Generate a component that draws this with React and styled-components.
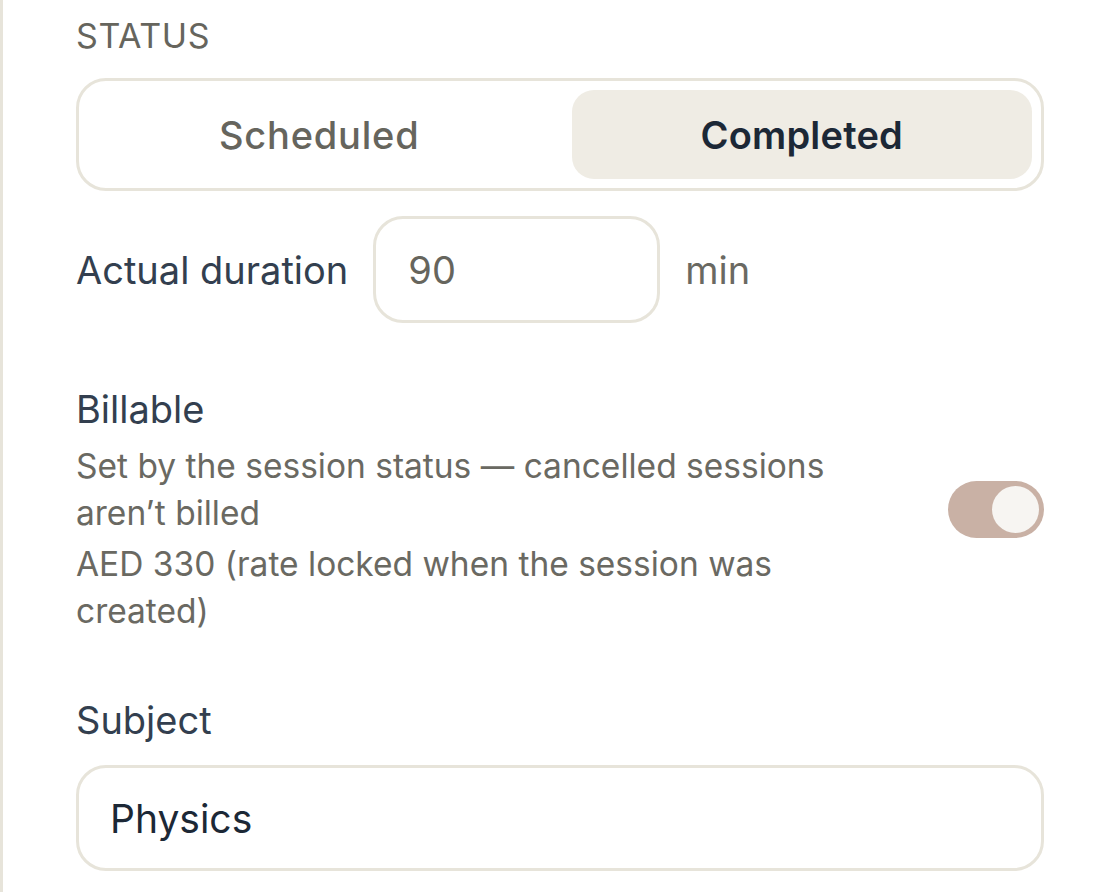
import React, { useState } from "react";
import styled, { createGlobalStyle } from "styled-components";

const GlobalStyle = createGlobalStyle`
  body {
    margin: 0;
    background: #ffffff;
    font-family: "Inter", "Noto Sans", sans-serif;
  }
`;

const Panel = styled.div`
  border-left: 3px solid #e7e4da;
  min-height: 892px;
  box-sizing: border-box;
  padding: 15px 0 0 73px;
  width: 1044px;
`;

const SectionLabel = styled.div`
  font-size: 34px;
  color: #66655d;
  letter-spacing: 0.6px;
  line-height: 42px;
`;

const Segmented = styled.div`
  margin-top: 21px;
  display: grid;
  grid-template-columns: 1fr 1fr;
  gap: 22px;
  padding: 9px 9px 9px 10px;
  border: 3px solid #e7e4da;
  border-radius: 30px;
  height: 113px;
  box-sizing: border-box;
`;

const Segment = styled.button`
  border: none;
  border-radius: 22px;
  background: ${(p) => (p.$active ? "#efece4" : "transparent")};
  color: ${(p) => (p.$active ? "#1c2836" : "#66655d")};
  font-family: inherit;
  font-size: 38px;
  letter-spacing: ${(p) => (p.$active ? "0.2px" : "0.8px")};
  font-weight: ${(p) => (p.$active ? 600 : 500)};
  cursor: pointer;
`;

const DurationRow = styled.div`
  margin-top: 25px;
  display: flex;
  align-items: center;
  gap: 25px;
`;

const FieldText = styled.span`
  font-size: 38px;
  color: ${(p) => (p.$muted ? "#6a6962" : "#333f4f")};
`;

const SmallInput = styled.div`
  width: 287px;
  height: 107px;
  box-sizing: border-box;
  border: 3px solid #e7e4da;
  border-radius: 30px;
  display: flex;
  align-items: center;
  padding-left: 32px;
  font-size: 38px;
  color: #66655d;
`;

const BillableRow = styled.div`
  margin-top: 61px;
  display: flex;
  align-items: center;
  justify-content: space-between;
`;

const BillableText = styled.div`
  display: flex;
  flex-direction: column;
  max-width: 800px;
`;

const FieldTitle = styled.div`
  font-size: 38px;
  color: #333f4f;
  line-height: 50px;
  margin-bottom: ${(p) => p.$gap || "9px"};
`;

const Hint = styled.div`
  font-size: 33.5px;
  color: #6a6962;
  line-height: 47px;
  & + & {
    margin-top: 4px;
  }
`;

const Toggle = styled.div`
  width: 96px;
  height: 57px;
  border-radius: 29px;
  background: #c9b1a5;
  display: flex;
  align-items: center;
  justify-content: flex-end;
  padding: 0 5px;
  box-sizing: border-box;
  flex-shrink: 0;
`;

const Knob = styled.div`
  width: 47px;
  height: 47px;
  border-radius: 50%;
  background: #f7f5f2;
`;

const SubjectBlock = styled.div`
  margin-top: 60px;
`;

const WideInput = styled.div`
  height: 106px;
  box-sizing: border-box;
  border: 3px solid #e7e4da;
  border-radius: 30px;
  display: flex;
  align-items: center;
  padding-left: 31px;
  font-size: 39px;
  color: #1c2836;
`;

export default function App() {
  const [status, setStatus] = useState("Completed");
  return (
    <>
      <GlobalStyle />
      <Panel>
        <SectionLabel>STATUS</SectionLabel>
        <Segmented>
          {["Scheduled", "Completed"].map((s) => (
            <Segment key={s} $active={status === s} onClick={() => setStatus(s)}>
              {s}
            </Segment>
          ))}
        </Segmented>

        <DurationRow>
          <FieldText>Actual duration</FieldText>
          <SmallInput>90</SmallInput>
          <FieldText $muted>min</FieldText>
        </DurationRow>

        <BillableRow>
          <BillableText>
            <FieldTitle>Billable</FieldTitle>
            <Hint>Set by the session status — cancelled sessions aren’t billed</Hint>
            <Hint>AED 330 (rate locked when the session was created)</Hint>
          </BillableText>
          <Toggle>
            <Knob />
          </Toggle>
        </BillableRow>

        <SubjectBlock>
          <FieldTitle $gap="20px">Subject</FieldTitle>
          <WideInput>Physics</WideInput>
        </SubjectBlock>
      </Panel>
    </>
  );
}
